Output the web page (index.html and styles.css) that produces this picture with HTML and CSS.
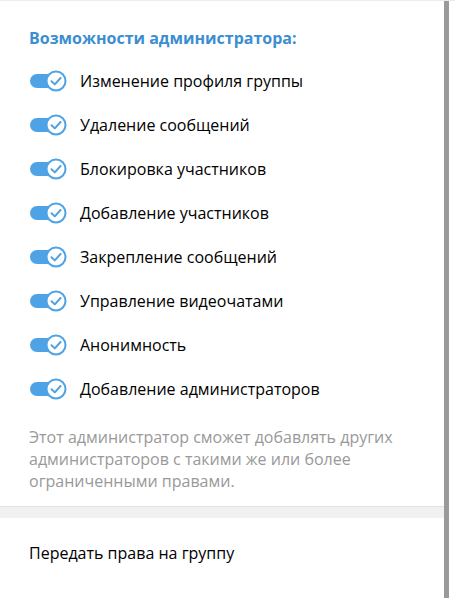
FILE: index.html
```html
<!DOCTYPE html>
<html lang="ru">
<head>
<meta charset="utf-8">
<link rel="stylesheet" href="styles.css">
</head>
<body>
<div class="page">
  <div class="content">
    <section class="rights">
      <h2 class="title">Возможности администратора:</h2>
      <ul class="list">
        <li class="row"><span class="toggle"><svg width="40" height="24" viewBox="0 0 40 24"><rect x="1" y="5" width="30" height="14" rx="7" fill="#4ea3e6"/><circle cx="27" cy="12" r="9.5" fill="#fff" stroke="#4ea3e6" stroke-width="2"/><path d="M22.5 12.2 L25.8 15.4 L31.5 9" fill="none" stroke="#4ea3e6" stroke-width="2" stroke-linecap="round" stroke-linejoin="round"/></svg></span><span class="label">Изменение профиля группы</span></li>
        <li class="row"><span class="toggle"><svg width="40" height="24" viewBox="0 0 40 24"><rect x="1" y="5" width="30" height="14" rx="7" fill="#4ea3e6"/><circle cx="27" cy="12" r="9.5" fill="#fff" stroke="#4ea3e6" stroke-width="2"/><path d="M22.5 12.2 L25.8 15.4 L31.5 9" fill="none" stroke="#4ea3e6" stroke-width="2" stroke-linecap="round" stroke-linejoin="round"/></svg></span><span class="label">Удаление сообщений</span></li>
        <li class="row"><span class="toggle"><svg width="40" height="24" viewBox="0 0 40 24"><rect x="1" y="5" width="30" height="14" rx="7" fill="#4ea3e6"/><circle cx="27" cy="12" r="9.5" fill="#fff" stroke="#4ea3e6" stroke-width="2"/><path d="M22.5 12.2 L25.8 15.4 L31.5 9" fill="none" stroke="#4ea3e6" stroke-width="2" stroke-linecap="round" stroke-linejoin="round"/></svg></span><span class="label">Блокировка участников</span></li>
        <li class="row"><span class="toggle"><svg width="40" height="24" viewBox="0 0 40 24"><rect x="1" y="5" width="30" height="14" rx="7" fill="#4ea3e6"/><circle cx="27" cy="12" r="9.5" fill="#fff" stroke="#4ea3e6" stroke-width="2"/><path d="M22.5 12.2 L25.8 15.4 L31.5 9" fill="none" stroke="#4ea3e6" stroke-width="2" stroke-linecap="round" stroke-linejoin="round"/></svg></span><span class="label">Добавление участников</span></li>
        <li class="row"><span class="toggle"><svg width="40" height="24" viewBox="0 0 40 24"><rect x="1" y="5" width="30" height="14" rx="7" fill="#4ea3e6"/><circle cx="27" cy="12" r="9.5" fill="#fff" stroke="#4ea3e6" stroke-width="2"/><path d="M22.5 12.2 L25.8 15.4 L31.5 9" fill="none" stroke="#4ea3e6" stroke-width="2" stroke-linecap="round" stroke-linejoin="round"/></svg></span><span class="label">Закрепление сообщений</span></li>
        <li class="row"><span class="toggle"><svg width="40" height="24" viewBox="0 0 40 24"><rect x="1" y="5" width="30" height="14" rx="7" fill="#4ea3e6"/><circle cx="27" cy="12" r="9.5" fill="#fff" stroke="#4ea3e6" stroke-width="2"/><path d="M22.5 12.2 L25.8 15.4 L31.5 9" fill="none" stroke="#4ea3e6" stroke-width="2" stroke-linecap="round" stroke-linejoin="round"/></svg></span><span class="label">Управление видеочатами</span></li>
        <li class="row"><span class="toggle"><svg width="40" height="24" viewBox="0 0 40 24"><rect x="1" y="5" width="30" height="14" rx="7" fill="#4ea3e6"/><circle cx="27" cy="12" r="9.5" fill="#fff" stroke="#4ea3e6" stroke-width="2"/><path d="M22.5 12.2 L25.8 15.4 L31.5 9" fill="none" stroke="#4ea3e6" stroke-width="2" stroke-linecap="round" stroke-linejoin="round"/></svg></span><span class="label">Анонимность</span></li>
        <li class="row"><span class="toggle"><svg width="40" height="24" viewBox="0 0 40 24"><rect x="1" y="5" width="30" height="14" rx="7" fill="#4ea3e6"/><circle cx="27" cy="12" r="9.5" fill="#fff" stroke="#4ea3e6" stroke-width="2"/><path d="M22.5 12.2 L25.8 15.4 L31.5 9" fill="none" stroke="#4ea3e6" stroke-width="2" stroke-linecap="round" stroke-linejoin="round"/></svg></span><span class="label">Добавление администраторов</span></li>
      </ul>
      <p class="note">Этот администратор сможет добавлять других администраторов с такими же или более ограниченными правами.</p>
    </section>
    <div class="divider"></div>
    <section class="actions">
      <div class="action">Передать права на группу</div>
    </section>
  </div>
  <div class="scrollbar"></div>
</div>
</body>
</html>
```

FILE: styles.css
```css
html, body {
  margin: 0;
  padding: 0;
  background: #fff;
}
body {
  font-family: "Open Sans", "Noto Sans", sans-serif;
  font-size: 16px;
  color: #000;
  width: 455px;
  height: 598px;
  overflow: hidden;
}
.page {
  display: flex;
  height: 598px;
  border-top: 1px solid #ececec;
  box-sizing: border-box;
}
.content {
  width: 444px;
  flex: none;
}
.scrollbar {
  width: 5px;
  flex: none;
  background: #9a9a9a;
}
.rights {
  padding: 26px 0 0 29px;
}
.title {
  margin: 0;
  font-size: 16px;
  font-weight: 700;
  line-height: 22px;
  color: #3b8ed1;
}
.list {
  list-style: none;
  margin: 10px 0 0 0;
  padding: 0;
}
.row {
  display: flex;
  align-items: center;
  height: 44px;
}
.toggle {
  display: flex;
  width: 51px;
  flex: none;
}
.toggle svg {
  display: block;
}
.label {
  line-height: 22px;
}
.note {
  margin: 15px 20px 0 0;
  line-height: 22px;
  color: #999;
}
.divider {
  margin-top: 14px;
  height: 11px;
  background: #f1f1f1;
  border-top: 1px solid #e3e3e3;
}
.actions {
  padding: 24px 0 0 29px;
}
.action {
  line-height: 22px;
}
```
